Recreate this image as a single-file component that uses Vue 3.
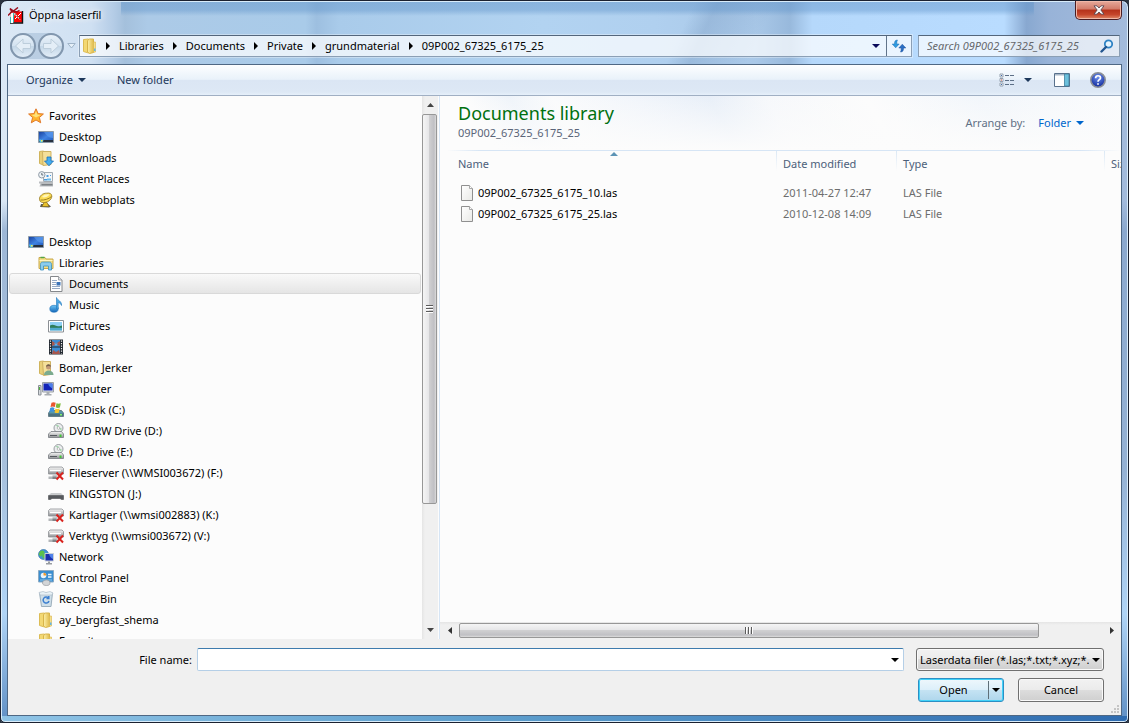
<script setup>
import { ref } from 'vue'

const crumbs = ['Libraries', 'Documents', 'Private', 'grundmaterial', '09P002_67325_6175_25']

const tree = [
  { level: 0, icon: 'star', label: 'Favorites' },
  { level: 1, icon: 'desktop', label: 'Desktop' },
  { level: 1, icon: 'downloads', label: 'Downloads' },
  { level: 1, icon: 'recent', label: 'Recent Places' },
  { level: 1, icon: 'dish', label: 'Min webbplats' },
  { level: 0, icon: 'desktop', label: 'Desktop', section: true },
  { level: 1, icon: 'libraries', label: 'Libraries' },
  { level: 2, icon: 'document', label: 'Documents', selected: true },
  { level: 2, icon: 'music', label: 'Music' },
  { level: 2, icon: 'pictures', label: 'Pictures' },
  { level: 2, icon: 'videos', label: 'Videos' },
  { level: 1, icon: 'user', label: 'Boman, Jerker' },
  { level: 1, icon: 'computer', label: 'Computer' },
  { level: 2, icon: 'osdisk', label: 'OSDisk (C:)' },
  { level: 2, icon: 'disc', label: 'DVD RW Drive (D:)' },
  { level: 2, icon: 'disc', label: 'CD Drive (E:)' },
  { level: 2, icon: 'offline', label: 'Fileserver (\\\\WMSI003672) (F:)' },
  { level: 2, icon: 'usb', label: 'KINGSTON (J:)' },
  { level: 2, icon: 'offline', label: 'Kartlager (\\\\wmsi002883) (K:)' },
  { level: 2, icon: 'offline', label: 'Verktyg (\\\\wmsi003672) (V:)' },
  { level: 1, icon: 'network', label: 'Network' },
  { level: 1, icon: 'control', label: 'Control Panel' },
  { level: 1, icon: 'recycle', label: 'Recycle Bin' },
  { level: 1, icon: 'folder', label: 'ay_bergfast_shema' },
  { level: 1, icon: 'folder', label: 'Favorites' },
]

const files = [
  { name: '09P002_67325_6175_10.las', date: '2011-04-27 12:47', type: 'LAS File' },
  { name: '09P002_67325_6175_25.las', date: '2010-12-08 14:09', type: 'LAS File' },
]

const fileName = ref('')
</script>

<template>
  <div class="window">
    <svg class="defs" width="0" height="0" aria-hidden="true">
      <defs>
        <linearGradient id="g-folder" x1="0" x2="1" y1="0" y2="0">
          <stop offset="0" stop-color="#fdf0a8" /><stop offset="1" stop-color="#e0bb4c" />
        </linearGradient>
        <linearGradient id="g-screen" x1="0" x2="1" y1="0" y2="1">
          <stop offset="0" stop-color="#173f9c" /><stop offset="0.5" stop-color="#3f82e2" /><stop offset="1" stop-color="#1d55b8" />
        </linearGradient>
        <linearGradient id="g-drive" x1="0" x2="0" y1="0" y2="1">
          <stop offset="0" stop-color="#f8f8f8" /><stop offset="1" stop-color="#8f9194" />
        </linearGradient>
        <linearGradient id="g-blue" x1="0" x2="0" y1="0" y2="1">
          <stop offset="0" stop-color="#6cc4f5" /><stop offset="1" stop-color="#1467b8" />
        </linearGradient>
        <linearGradient id="g-page" x1="0" x2="1" y1="0" y2="1">
          <stop offset="0" stop-color="#ffffff" /><stop offset="1" stop-color="#e9e9e6" />
        </linearGradient>
        <radialGradient id="g-help" cx="0.5" cy="0.3" r="0.7">
          <stop offset="0" stop-color="#6f93ee" /><stop offset="1" stop-color="#10289a" />
        </radialGradient>
      </defs>
      <symbol id="star" viewBox="0 0 16 16">
        <path d="M8 0.8l2.1 4.8 5.3.4-4 3.5 1.3 5.3L8 12l-4.7 2.8 1.3-5.3-4-3.5 5.3-.4z" fill="#ffb52e" stroke="#e0782a" />
        <path d="M8 3l1.3 3.6 3.5.3L8 9.5 3.5 7l3.2-.4z" fill="#ffe27a" />
      </symbol>
      <symbol id="desktop" viewBox="0 0 16 16">
        <path d="M0.5 2.5h15v11h-15z" fill="url(#g-screen)" stroke="#8d9aa8" />
        <path d="M1 11h14v2H1z" fill="#27313f" />
        <path d="M6 3L15 3V9C11 9 8 6 6 3z" fill="#5d9cf0" opacity="0.6" />
        <path d="M1 11.5l1-1.500 1 1 2-.5.5 1.500-1.500 1.500H2z" fill="#4fc3e8" />
        <path d="M3 11h1.500v1.500H3z" fill="#ffe14d" />
      </symbol>
      <symbol id="folder" viewBox="0 0 16 16">
        <path d="M1.500 1.500l5-.5v14l-5-1.500z" fill="#f3d873" stroke="#dcbc55" />
        <path d="M5.500 2.500l2-1.500h4v13.500l-4 1-2-1.500z" fill="url(#g-folder)" stroke="#d8b44a" />
        <path d="M11.500 4h2v10l-2 .5z" fill="#f5df8b" stroke="#d8b44a" stroke-width="0.600" />
        <path d="M12 10.500h1.500v2.500H12z" fill="#64b5e8" />
      </symbol>
      <symbol id="downloads" viewBox="0 0 16 16">
        <path d="M1.500 1.500l4-.5v14l-4-1.500z" fill="#e9cf78" stroke="#d0b45c" />
        <path d="M4.500 1.500h8.500v13l-8 1z" fill="#f5e09a" stroke="#cfb262" />
        <path d="M9 7h4v4h2.500L11 15.800 6.500 11H9z" fill="#45adf0" stroke="#1b6fb8" stroke-width="0.800" />
      </symbol>
      <symbol id="recent" viewBox="0 0 16 16">
        <path d="M5.500 1.500h9v9h-9z" fill="#f4f6f8" stroke="#a3abb2" />
        <path d="M1 10.500h4v2H1zM3 11h12v4.500H1.500z" fill="#b9bcbf" />
        <path d="M3.500 13h11v1.500h-11z" fill="#7d8185" />
        <circle cx="3.800" cy="3.800" r="3.200" fill="#eef3f7" stroke="#8f9aa5" />
        <path d="M3.800 2v2h1.500" fill="none" stroke="#44515e" stroke-width="0.800" />
        <path d="M8.500 4h2v2h-2zM6 8h3v1.500H6zM12 4h1v1h-1z" fill="#4a9be0" />
        <path d="M9 7.500h4v2H9z" fill="#6dbbe9" />
      </symbol>
      <symbol id="dish" viewBox="0 0 16 16">
        <path d="M2 15l1-3h7l3 2.500-2 1z" fill="#5b5b55" />
        <path d="M4 14.500l2-4h3l2 4z" fill="#e7c02c" stroke="#836a1c" stroke-width="0.700" />
        <path d="M1.500 7.500C1 4 5 1 8.500 1.200 12 .5 14 2 13.800 4.500 13.500 8 9 11 5 10.500 3 10.500 1.800 9.500 1.500 7.500z" fill="#fbdc54" stroke="#94771f" stroke-width="0.800" />
        <path d="M2.500 8C6 8.500 11 7 13.500 4.500" fill="none" stroke="#9c7d22" />
        <path d="M4 5C5.500 2.500 9 2 11.500 2.500 10 5 6 6 4 5z" fill="#fff5b8" />
      </symbol>
      <symbol id="libraries" viewBox="0 0 16 16">
        <path d="M1 2.500h6l1 1.500h7v9.500H1z" fill="#f4dd83" stroke="#c9a94a" />
        <path d="M1.500 5.500h13" stroke="#fff3bf" />
        <path d="M2.500 2.500h4" stroke="#56a547" stroke-width="1.500" />
        <path d="M2.500 15V9.500c0-1.500.7-2.500 2-2.500h7c1.300 0 2 1 2 2.500V15h-3v-4h-5v4z" fill="#8bcdee" stroke="#3b8fbe" stroke-width="0.800" />
      </symbol>
      <symbol id="document" viewBox="0 0 16 16">
        <path d="M2.500 .5h8l3.500 3.500v11.500H2.500z" fill="#fff" stroke="#85888c" />
        <path d="M10.500 .5v3.500H14" fill="#dfe3e8" stroke="#85888c" stroke-width="0.700" />
        <path d="M4 4.500h5M4 6.500h4M4 8.500h4M4 10.500h8M4 12.500h8" stroke="#8aa0be" stroke-width="0.900" />
        <path d="M8.500 6h4v3.500h-4z" fill="#3b73b8" />
      </symbol>
      <symbol id="music" viewBox="0 0 16 16">
        <ellipse cx="6" cy="11.800" rx="4.200" ry="3.500" fill="url(#g-blue)" stroke="#1c71b8" stroke-width="0.600" />
        <path d="M8.500 12V.5c1 3 5.500 3.500 5 8-1-2-2-2.800-3.300-3V12z" fill="#4aa8e4" stroke="#1f76bc" stroke-width="0.600" />
      </symbol>
      <symbol id="pictures" viewBox="0 0 16 16">
        <path d="M0.500 2.500h15v11.500h-15z" fill="#fff" stroke="#8b8f94" />
        <path d="M2 4h12v8.500H2z" fill="#8fd0f5" />
        <path d="M2 7.500c3-2 5 0 7 .5s3 0 5-.5v2.500H2z" fill="#2f7d5a" />
        <path d="M2 9.800h12v2.700H2z" fill="#4fa9cc" />
      </symbol>
      <symbol id="videos" viewBox="0 0 16 16">
        <path d="M1 .5h14v15H1z" fill="#222830" />
        <path d="M4 1h8v6.500H4zM4 8.500h8V15H4z" fill="#3c8cd4" />
        <path d="M4 2l4 2.500L12 2v5l-4-1.500L4 7zM4 15l1-4 3 2 3-2 1 4z" fill="#a8564c" />
        <path d="M6 4.500h4L8 7z" fill="#5cb4f4" />
        <path d="M2.500 1.500v13M13.500 1.500v13" stroke="#f1f1f1" stroke-width="1.200" stroke-dasharray="1.300 1.200" />
      </symbol>
      <symbol id="user" viewBox="0 0 16 16">
        <path d="M1.500 1.500l4-.5v14l-4-1.500z" fill="#e9cf78" stroke="#d0b45c" />
        <path d="M4.500 1.500h8v13l-7 1z" fill="#f5e09a" stroke="#cfb262" />
        <circle cx="10.500" cy="7" r="2.500" fill="#c39a76" /><path d="M8 6.800c0-3.500 5-3.500 5 0-1.500-1-3-1-5 0z" fill="#75604a" />
        <path d="M6 15c0-6 9.500-6 9.500 0z" fill="#7bab8e" />
      </symbol>
      <symbol id="computer" viewBox="0 0 16 16">
        <path d="M0.500 4.500h2.500v9.500h-2.500z" fill="#d6dade" stroke="#8b9096" />
        <path d="M4.500 1.500h11v9.500h-11z" fill="#dce0e4" stroke="#9aa0a6" />
        <path d="M5.500 2.500h9v7h-9z" fill="#1324b8" /><path d="M10 2.500h4.500v5C12 6 11 5 10 2.500z" fill="#4b7eea" />
        <path d="M8.500 11h3v2h2v1.500h-7V13h2z" fill="#a9adb2" /><path d="M1.500 6v3" stroke="#4fae3e" />
      </symbol>
      <symbol id="osdisk" viewBox="0 0 16 16">
        <path d="M0.500 11l2-2.500h11l2 2.500v3.500h-15z" fill="#5798ab" stroke="#566b76" stroke-width="0.800" />
        <path d="M1 11.500h14v2.500H1z" fill="#4a7180" />
        <path d="M12 12h2v1.500h-2z" fill="#7ff26a" />
        <path d="M3.500 .8C5 -.1 6.500 .2 7.700 .8L6.800 5C5.400 4.300 4 4.300 2.500 5z" fill="#e9552d" />
        <path d="M8.500 1.300c1.500.7 2.800.6 4.300 0l-.9 4.200c-1.500.6-2.800.6-4.200-.2z" fill="#7dbb3a" />
        <path d="M2.200 5.900c1.300-.8 2.800-.8 4.300 0l-.9 4.200c-1.300-.8-2.800-.8-4.300 0z" fill="#3f93dd" />
        <path d="M7.500 6.400c1.400.7 2.800.7 4.200.1l-.9 4.200c-1.300.6-2.800.5-4.200-.2z" fill="#f8c52c" />
      </symbol>
      <symbol id="disc" viewBox="0 0 16 16">
        <circle cx="10.500" cy="5" r="4.500" fill="#eceeef" stroke="#8f9498" stroke-width="0.900" />
        <path d="M10.500 5l-3-3h3zM10.500 5l3 3V5z" fill="#a5d5ae" /><circle cx="10.500" cy="5" r="1.300" fill="#fff" stroke="#999" stroke-width="0.600" />
        <path d="M0.500 11l2.500-2.500h10.500l2 2.500v3.500h-15z" fill="url(#g-drive)" stroke="#777b80" stroke-width="0.800" />
        <path d="M2 12.500h7" stroke="#565a5f" /><path d="M11.500 11.500h2v2.500h-2z" fill="#42c634" />
      </symbol>
      <symbol id="offline" viewBox="0 0 16 16">
        <path d="M0.500 3.500l1.500-1.500h12l1.500 1.500v5.500H.5z" fill="url(#g-drive)" stroke="#8d9094" stroke-width="0.800" />
        <path d="M4.500 9h5v2.500h-5z" fill="#c9cbcd" /><path d="M.5 11.500h9V14H.5z" fill="#b3b6b9" /><path d="M4.500 11.500h4V14h-4z" fill="#808488" />
        <path d="M2 5.500h11" stroke="#fff" stroke-width="1.400" />
        <path d="M8.500 7.500l6.500 7M15 7.500l-6.500 7" stroke="#d9231e" stroke-width="2" />
      </symbol>
      <symbol id="usb" viewBox="0 0 16 16">
        <path d="M.5 9.500L3 7h10l2.500 2.500z" fill="#c9cbcd" />
        <path d="M.5 9.500h15v4h-2L12 12.500H4L2.500 13.500h-2z" fill="#56595d" stroke="#3b3d40" stroke-width="0.500" />
      </symbol>
      <symbol id="network" viewBox="0 0 16 16">
        <circle cx="5.500" cy="5.500" r="5" fill="#3f94d8" stroke="#2b699e" stroke-width="0.600" />
        <path d="M2 2.500c2-2 4-1 4.500.5S4 5 3.500 7 1 6 .8 5zM4 6l3-2v4l-2 2z" fill="#5cc248" />
        <path d="M7 4.500h8.500v7.500H7z" fill="#1a2fae" stroke="#c9d0d8" /><path d="M11 5h4v5C13 9 12 8 11 5z" fill="#4f81ea" />
        <path d="M10 12.500h2v1.500h2v1.500H8v-1.500h2z" fill="#999da2" />
      </symbol>
      <symbol id="control" viewBox="0 0 16 16">
        <path d="M0.500 .5h15v11.500h-15z" fill="#3a8ed0" stroke="#8cabc4" />
        <circle cx="5.500" cy="5.500" r="2.800" fill="#e9f5fd" /><path d="M5.500 5.500V2.700A2.800 2.800 0 0 1 8.300 5.500z" fill="#f39a2b" />
        <path d="M10 4.500h3.500M10 7h3.500" stroke="#e9f5fd" stroke-width="1.300" /><path d="M2 10h12" stroke="#8cc6ee" />
        <path d="M4.500 13c0-2 1.500-3 4-3s3.500 1 3.500 3-1.500 2.500-3.500 2.500-4-.5-4-2.500z" fill="#d3d5d7" stroke="#8b8f94" stroke-width="0.600" />
      </symbol>
      <symbol id="recycle" viewBox="0 0 16 16">
        <path d="M1.500 2h13L13 15.500H3.500z" fill="#cfdfe9" stroke="#93a7b5" stroke-width="0.900" />
        <path d="M1 1.500L5 .5l3 1 4-1 3 1.500-1 2H2z" fill="#e8f1f6" stroke="#a7b7c2" stroke-width="0.600" />
        <path d="M10.500 7.200A3 3 0 1 0 11 10M10.800 5v2.600H8.500" fill="none" stroke="#3c7fd0" stroke-width="1.500" />
      </symbol>
      <symbol id="page" viewBox="0 0 14 16">
        <path d="M1.500 .5h8l3 3v12h-11z" fill="url(#g-page)" stroke="#909090" />
        <path d="M9.500 .5v3h3" fill="#fff" stroke="#a8a8a8" />
      </symbol>
      <symbol id="down" viewBox="0 0 8 4"><path d="M0 0h8L4 4z" fill="currentColor" /></symbol>
    </svg>

    <header class="titlebar">
      <svg class="app-icon" viewBox="0 0 16 17" aria-hidden="true">
        <path d="M2.500 4.500h12v11h-12z" fill="#f00" />
        <path d="M14.500 4v12H2" fill="none" stroke="#111" stroke-width="1.400" />
        <path d="M3 6h3l-1 9.500H3zM6 6.500L12 12" fill="#fff" stroke="#fff" />
        <path d="M5.500 6v9M2.500 16v-6" stroke="#3ab5b0" />
        <path d="M6.500 6l5.500 6.500M13 6l-6 6" stroke="#fff" stroke-width="1" />
        <path d="M7 6.500l5 5.500" stroke="#222" stroke-width="0.800" stroke-dasharray="2 1" />
        <path d="M0 8.500L4 4.500 2 1.500 5.500 4 10 .5M3 4.800h6l2.500-1.500" fill="none" stroke="#9b0d1d" stroke-width="1.500" />
      </svg>
      <h1 class="caption">Öppna laserfil</h1>
      <button class="close" type="button" aria-label="Close">
        <svg width="12" height="10" viewBox="0 0 14 12" aria-hidden="true">
          <path d="M1 1h3.600L7 3.600 9.400 1H13L9.200 6 13 11H9.400L7 8.400 4.600 11H1L4.800 6z" fill="#f7f7f7" stroke="#54404a" />
        </svg>
      </button>
    </header>

    <div class="navbar">
      <div class="travel">
        <button class="round" type="button" aria-label="Back">
          <svg width="18" height="18" viewBox="0 0 18 18"><path d="M9 2L1.500 9 9 16v-4.500h7.500v-5H9z" fill="#e4eef7" stroke="#bccddb" /></svg>
        </button>
        <button class="round" type="button" aria-label="Forward">
          <svg width="18" height="18" viewBox="0 0 18 18"><path d="M9 2l7.500 7L9 16v-4.500H1.500v-5H9z" fill="#e4eef7" stroke="#bccddb" /></svg>
        </button>
      </div>
      <button class="history" type="button" aria-label="Recent pages">
        <svg width="9" height="6" viewBox="0 0 9 6"><path d="M.8 .5h7.400L4.500 5z" fill="#e6f0f8" stroke="#9fb4c8" /></svg>
      </button>
      <div class="address">
        <svg class="address-icon" viewBox="0 0 16 16" aria-hidden="true"><use href="#folder" /></svg>
        <nav class="crumbs" aria-label="Address">
          <template v-for="crumb in crumbs" :key="crumb">
            <svg class="crumb-arrow" viewBox="0 0 4 8" aria-hidden="true"><path d="M0 0l4 4-4 4z" fill="#000" /></svg>
            <a class="crumb" href="#">{{ crumb }}</a>
          </template>
        </nav>
        <button class="address-drop" type="button" aria-label="Previous locations">
          <svg width="8" height="4" aria-hidden="true"><use href="#down" /></svg>
        </button>
        <button class="refresh" type="button" aria-label="Refresh">
          <svg width="16" height="14" viewBox="0 0 16 14" aria-hidden="true">
            <path d="M6.500 1C4 1 3.500 2.500 3.500 5H1.200L4.700 8.800 8.200 5H5.800c0-2 .2-3 .7-4z" fill="#2f9be0" stroke="#1c6cb0" stroke-width="0.500" />
            <path d="M9.500 13c2.500 0 3-1.500 3-4h2.300l-3.500-3.800L7.800 9h2.400c0 2-.2 3-.7 4z" fill="#2b6fc4" stroke="#1b4f9a" stroke-width="0.500" />
          </svg>
        </button>
      </div>
      <label class="search">
        <input type="search" aria-label="Search" placeholder="Search 09P002_67325_6175_25" />
        <svg width="14" height="14" viewBox="0 0 14 14" aria-hidden="true">
          <circle cx="8.500" cy="5" r="3.700" fill="#e6f4fd" stroke="#2f83c4" stroke-width="1.800" />
          <path d="M6 8l-4.500 4.500" stroke="#22558f" stroke-width="2.400" stroke-linecap="round" />
        </svg>
      </label>
    </div>

    <main class="client">
      <div class="toolbar">
        <button class="tool" type="button">Organize <svg width="8" height="4" aria-hidden="true"><use href="#down" /></svg></button>
        <button class="tool new-folder" type="button">New folder</button>
        <span class="spacer"></span>
        <button class="tool view" type="button" aria-label="Change your view">
          <svg width="16" height="14" viewBox="0 0 16 14" aria-hidden="true">
            <path d="M1 1h3v3H1zM1 5.500h3v3H1zM1 10h3v3H1z" fill="#fff" stroke="#8a97a6" stroke-width="0.900" />
            <path d="M2 2h1v1H2zM2 11h1v1H2z" fill="#3f6db0" /><path d="M2 6.500h1v1H2z" fill="#c43a2d" />
            <path d="M6 2.500h4M11 2.500h4M6 7.500h4M11 7.500h4M6 11.500h4M11 11.500h4" stroke="#5d6f86" />
          </svg>
          <svg width="8" height="4" aria-hidden="true"><use href="#down" /></svg>
        </button>
        <button class="tool preview" type="button" aria-label="Show the preview pane">
          <svg width="16" height="14" viewBox="0 0 16 14" aria-hidden="true">
            <path d="M.5 .5h15v13H.5z" fill="#fff" stroke="#59718c" /><path d="M1 1h14v1.500H1z" fill="#a8b8c8" />
            <path d="M10.500 1h4.500v12h-4.500z" fill="#6cc0dc" stroke="#3e7d9c" stroke-width="0.800" />
          </svg>
        </button>
        <button class="tool help" type="button" aria-label="Help">
          <svg width="16" height="16" viewBox="0 0 16 16" aria-hidden="true">
            <circle cx="8" cy="8" r="7.200" fill="url(#g-help)" stroke="#8c9096" stroke-width="1.600" />
            <path d="M5.600 6.200C5.600 3 10.500 3 10.500 5.900 10.500 7.700 8 7.700 8 9.700M8 11.200v1.600" fill="none" stroke="#fff" stroke-width="1.700" />
          </svg>
        </button>
      </div>

      <div class="panes">
        <aside class="tree-pane">
          <ul class="tree">
            <li v-for="(node, i) in tree" :key="i" :class="['node', 'level-' + node.level, { selected: node.selected, section: node.section }]">
              <svg class="icon" viewBox="0 0 16 16" aria-hidden="true"><use :href="'#' + node.icon" /></svg>
              <span>{{ node.label }}</span>
            </li>
          </ul>
          <div class="vscroll">
            <button type="button" aria-label="Scroll up"><svg width="7" height="4" viewBox="0 0 7 4"><path d="M3.500 0L7 4H0z" fill="#444" /></svg></button>
            <div class="vtrack"><div class="vthumb"><i></i><i></i><i></i></div></div>
            <button type="button" aria-label="Scroll down"><svg width="7" height="4" viewBox="0 0 7 4"><path d="M0 0h7L3.500 4z" fill="#444" /></svg></button>
          </div>
        </aside>

        <section class="content">
          <div class="library">
            <div>
              <h2>Documents library</h2>
              <p>09P002_67325_6175_25</p>
            </div>
            <div class="arrange">
              <span>Arrange by:</span>
              <button type="button">Folder <svg width="8" height="4" aria-hidden="true"><use href="#down" /></svg></button>
            </div>
          </div>
          <div class="rule"></div>
          <div class="listing">
            <table>
              <colgroup><col class="c-name" /><col class="c-date" /><col class="c-type" /><col class="c-size" /></colgroup>
              <thead>
                <tr>
                  <th scope="col" aria-sort="ascending">Name
                    <svg class="sort" width="8" height="4" viewBox="0 0 8 4" aria-hidden="true"><path d="M4 0l4 4H0z" fill="#5c93b5" /></svg>
                  </th>
                  <th scope="col">Date modified</th>
                  <th scope="col">Type</th>
                  <th scope="col">Size</th>
                </tr>
              </thead>
              <tbody>
                <tr v-for="file in files" :key="file.name">
                  <td class="name"><svg width="14" height="16" aria-hidden="true"><use href="#page" /></svg>{{ file.name }}</td>
                  <td>{{ file.date }}</td>
                  <td>{{ file.type }}</td>
                  <td></td>
                </tr>
              </tbody>
            </table>
          </div>
          <div class="hscroll">
            <button type="button" aria-label="Scroll left"><svg width="4" height="7" viewBox="0 0 4 7"><path d="M4 0v7L0 3.500z" fill="#333" /></svg></button>
            <div class="htrack"><div class="hthumb"><i></i><i></i><i></i></div></div>
            <button type="button" aria-label="Scroll right"><svg width="4" height="7" viewBox="0 0 4 7"><path d="M0 0l4 3.500L0 7z" fill="#333" /></svg></button>
          </div>
        </section>
      </div>

      <form class="footer" @submit.prevent>
        <div class="file-row">
          <label for="file-name">File name:</label>
          <div class="combo">
            <input id="file-name" v-model="fileName" type="text" autocomplete="off" />
            <button type="button" aria-label="Show file names"><svg width="8" height="4" aria-hidden="true"><use href="#down" /></svg></button>
          </div>
          <div class="filter">
            <select aria-label="File type"><option>Laserdata filer (*.las;*.txt;*.xyz;*.</option></select>
            <svg width="8" height="4" aria-hidden="true"><use href="#down" /></svg>
          </div>
        </div>
        <div class="actions">
          <div class="open">
            <button class="open-main" type="submit">Open</button>
            <button class="open-more" type="button" aria-label="More open options"><svg width="8" height="4" aria-hidden="true"><use href="#down" /></svg></button>
          </div>
          <button class="cancel" type="button">Cancel</button>
        </div>
        <svg class="grip" width="10" height="10" viewBox="0 0 10 10" aria-hidden="true">
          <path d="M7 0h2v2H7zM7 3h2v2H7zM7 6h2v2H7zM4 3h2v2H4zM4 6h2v2H4zM1 6h2v2H1z" fill="#c4c4c4" />
        </svg>
      </form>
    </main>
  </div>
</template>

<style>
body { background: #2b3440; }
</style>

<style scoped>
* { box-sizing: border-box; }
button, input, select { font: inherit; color: inherit; margin: 0; padding: 0; border: 0; background: none; }
button { display: flex; align-items: center; justify-content: center; white-space: nowrap; }
svg { display: block; flex: none; }
h1, h2, p, ul { margin: 0; padding: 0; font-weight: normal; }
.defs { position: absolute; }

.window {
  display: flex;
  flex-direction: column;
  height: 100vh;
  padding: 0 6px 6px;
  overflow: hidden;
  border: 1px solid #1b2130;
  border-radius: 7px 7px 5px 5px;
  box-shadow: inset 0 0 0 1px #d9ecfa;
  font-family: "Noto Sans", "Open Sans", sans-serif;
  font-size: 11px;
  line-height: 16px;
  color: #000;
  background:
    linear-gradient(to right, #8fc4e6 0, #5c9dcc 45%, #2f6cb0 100%) bottom / 100% 6px no-repeat,
    linear-gradient(to bottom, #5f93c980 0, #5f93c970 9px, #5f93c900 15px) 120px 0 / 81% 15px no-repeat,
    linear-gradient(to bottom, #7f9fc700 200px, #7f9fc7aa 230px, #8eadd0aa 65%, #b0d4f6 85%, #5f8fc4 100%),
    linear-gradient(115deg, #ffffff00 60%, #6f90b84d 62%, #ffffff00 67%) 0 0 / 100% 64px no-repeat,
    linear-gradient(to right, #dbe8f5 0, #cfe0f2 8%, #b4cce6 10%, #a4c0dc 11%, #accae7 13%, #a9cbe9 27%, #9dbfe0 28%, #a9cbea 30%, #b2d3f1 48%, #b0d0ef 58%, #a9c8e8 67%, #98b9dc 70%, #b5d8fb 72%, #b9dcff 89%, #88a8d0 91%, #98b3d8 93%, #a3bbdc 100%);
}

.titlebar { display: flex; align-items: flex-start; height: 31px; flex: none; }
.app-icon { width: 16px; height: 17px; margin: 6px 5px 0 1px; }
.caption { flex: 1; margin-top: 6px; font-size: 11px; line-height: 16px; text-shadow: 0 0 6px #fff, 0 0 8px #fff; }
.close {
  width: 47px;
  height: 19px;
  border: 1px solid #4a1d22;
  border-top: 0;
  border-radius: 0 0 5px 5px;
  box-shadow: inset 0 0 0 1px #f0b8a8;
  background: linear-gradient(#e6a99b 0, #d27b69 45%, #b5311a 50%, #c5452b 75%, #e08a68 100%);
}

.navbar { display: flex; align-items: center; flex: none; height: 28px; margin-bottom: 4px; padding: 0 2px 0 3px; }
.travel { display: flex; gap: 2px; border-radius: 13px; background: #9db8d280; }
.round {
  width: 26px;
  height: 26px;
  border: 2px solid #8297ae;
  border-radius: 50%;
  background: linear-gradient(#e8f1f9 0, #d3e2f0 50%, #c4d7e8 52%, #e2edf7 100%);
}
.history { width: 15px; height: 22px; }
.address {
  display: flex;
  align-items: center;
  flex: 1;
  min-width: 0;
  height: 22px;
  border: 1px solid #8b9fb5;
  border-top-color: #53667c;
  background: #ffffffb8;
  box-shadow: 0 0 0 1px #ffffff55;
}
.address-icon { width: 16px; height: 16px; margin: 0 8px 0 2px; }
.crumbs { display: flex; align-items: center; gap: 9px; flex: 1; min-width: 0; overflow: hidden; }
.crumb-arrow { width: 4px; height: 8px; }
.crumb { color: #000; text-decoration: none; white-space: nowrap; }
.address-drop { width: 20px; height: 20px; color: #0a0a5a; }
.refresh { width: 25px; height: 20px; border-left: 1px solid #61748a; }
.search {
  display: flex;
  align-items: center;
  width: 202px;
  height: 22px;
  margin-left: 6px;
  padding: 0 5px 0 8px;
  border: 1px solid #8b9fb5;
  border-top-color: #53667c;
  background: #ffffffb0;
}
.search input { flex: 1; min-width: 0; outline: 0; }
.search input::placeholder { color: #66686c; font-style: italic; opacity: 1; }

.client { display: flex; flex-direction: column; flex: 1; min-height: 0; border: 1px solid #4f6884; background: #fcfcfc; }
.toolbar {
  display: flex;
  align-items: center;
  flex: none;
  height: 31px;
  padding: 0 15px 0 18px;
  border-bottom: 1px solid #a0afc3;
  color: #1e395b;
  background: linear-gradient(#fdfeff 0, #e9f2fa 48%, #dbe6f4 50%, #dde8f5 90%, #e6f0fa 100%);
}
.tool { height: 24px; gap: 5px; }
.new-folder { margin-left: 31px; }
.spacer { flex: 1; }
.view { gap: 9px; }
.preview { margin-left: 22px; }
.help { margin-left: 20px; }

.panes { display: flex; flex: 1; min-height: 0; }
.tree-pane { display: flex; flex: none; width: 432px; border-right: 1px solid #d6e5f5; }
.tree { flex: 1; min-width: 0; padding: 9px 1px 0; overflow: hidden; list-style: none; }
.node { display: flex; align-items: center; gap: 5px; height: 21px; border: 1px solid transparent; border-radius: 3px; white-space: nowrap; }
.node.section { margin-top: 21px; }
.level-0 { padding-left: 18px; }
.level-1 { padding-left: 28px; }
.level-2 { padding-left: 38px; }
.selected { border-color: #d9d9d9; background: linear-gradient(#f9f9f9, #e5e5e5); }
.icon { width: 16px; height: 16px; }

.vscroll { display: flex; flex-direction: column; width: 16px; margin-right: 1px; background: linear-gradient(to right, #e5e5e5, #f0f0f0 3px); }
.vscroll button { height: 18px; }
.vtrack { flex: 1; padding-right: 1px; }
.vthumb {
  display: flex;
  flex-direction: column;
  align-items: center;
  justify-content: center;
  gap: 1px;
  height: 77%;
  border: 1px solid #979797;
  border-radius: 2px;
  background: linear-gradient(to right, #f5f5f5 0, #e6e6e8 45%, #cfcfd1 50%, #c0c0c4 85%, #dcdcdc 100%);
}
.vthumb i { width: 7px; height: 2px; background: linear-gradient(#5c5c5c 50%, #ffffff 50%); }

.content { display: flex; flex-direction: column; flex: 1; min-width: 0; }
.library {
  display: flex;
  justify-content: space-between;
  align-items: flex-start;
  flex: none;
  height: 54px;
  padding: 5px 37px 0 18px;
  background:
    linear-gradient(to bottom, #fcfcfc00 0, #fcfcfc 100%),
    linear-gradient(60deg, #fcfcfc 8%, #eff4fa 14%, #fafbfc 20%, #f1f5fb 32%, #e8eff8 42%, #f6f8fb 50%, #fcfcfc 64%, #f2f6fb 80%, #fbfcfd 100%);
}
.library h2 { font-size: 18px; line-height: 24px; color: #00700f; }
.library p { line-height: 16px; color: #5a6579; }
.arrange { display: flex; align-items: center; gap: 13px; height: 44px; color: #5f6f84; }
.arrange button { gap: 5px; color: #0066cc; }
.rule { flex: none; height: 1px; background: linear-gradient(to right, #d6e5f500 1%, #d6e5f5 6%, #d6e5f5 94%, #d6e5f500 100%); }
.listing { flex: 1; min-height: 0; padding-left: 10px; overflow: hidden; }
table { width: 734px; table-layout: fixed; border-collapse: collapse; }
.c-name { width: 326px; }
.c-date { width: 120px; }
.c-type { width: 208px; }
th { position: relative; height: 31px; padding: 0 0 6px 7px; font-weight: normal; text-align: left; color: #4c607a; background: linear-gradient(#dbe8f5, #dbe8f500) 0 0 / 1px 20px no-repeat; }
th:first-child { padding-left: 8px; background: none; }
.sort { position: absolute; top: 1px; left: 49%; }
td { height: 21px; padding: 0 0 0 7px; color: #6d6d6d; white-space: nowrap; }
td.name { display: flex; align-items: center; gap: 4px; padding-left: 10px; color: #000; }

.hscroll { display: flex; flex: none; height: 17px; padding: 0 1px; background: linear-gradient(#e5e5e5, #f0f0f0 3px); }
.hscroll button { width: 17px; }
.htrack { flex: 1; padding: 1px 0 1px 1px; }
.hthumb {
  display: flex;
  align-items: center;
  justify-content: center;
  gap: 1px;
  width: 90%;
  height: 15px;
  border: 1px solid #979797;
  border-radius: 2px;
  background: linear-gradient(#f5f5f5 0, #e6e6e8 45%, #cfcfd1 50%, #c0c0c4 85%, #dcdcdc 100%);
}
.hthumb i { width: 2px; height: 7px; background: linear-gradient(to right, #5c5c5c 50%, #ffffff 50%); }

.footer { position: relative; flex: none; padding: 9px 17px 13px 0; background: #f0f0f0; }
.file-row { display: flex; align-items: center; }
.file-row label { width: 184px; margin-right: 5px; text-align: right; }
.combo { display: flex; flex: 1; min-width: 0; height: 23px; border: 1px solid #b5cfe7; border-top-color: #3d7bad; border-radius: 2px; background: #fff; }
.combo input { flex: 1; min-width: 0; padding: 0 4px; outline: 0; }
.combo button { width: 17px; }
.filter { display: flex; align-items: center; position: relative; width: 188px; height: 23px; margin-left: 12px; }
.filter select {
  width: 100%;
  height: 23px;
  padding: 0 12px 0 3px;
  appearance: none;
  border: 1px solid #707070;
  border-radius: 3px;
  box-shadow: inset 0 0 0 1px #fafafa;
  background: linear-gradient(#f2f2f2 0, #ebebeb 49%, #dddddd 50%, #cfcfcf 100%);
}
.filter svg { position: absolute; right: 4px; pointer-events: none; }
.actions { display: flex; justify-content: flex-end; gap: 14px; margin-top: 7px; }
.open {
  display: flex;
  width: 86px;
  height: 24px;
  border: 1px solid #2c8fc4;
  border-radius: 3px;
  box-shadow: inset 0 0 0 1px #42d2f8;
  background: linear-gradient(#eef7fc 0, #dceffa 49%, #c5e3f3 50%, #aed6ec 100%);
}
.open-main { flex: 1; }
.open-more { width: 15px; margin: 2px 0; border-left: 1px solid #5f6f78; }
.cancel {
  width: 86px;
  height: 24px;
  border: 1px solid #707070;
  border-radius: 3px;
  box-shadow: inset 0 0 0 1px #fafafa;
  background: linear-gradient(#f2f2f2 0, #ebebeb 49%, #dddddd 50%, #cfcfcf 100%);
}
.grip { position: absolute; right: 1px; bottom: 0; }
</style>
